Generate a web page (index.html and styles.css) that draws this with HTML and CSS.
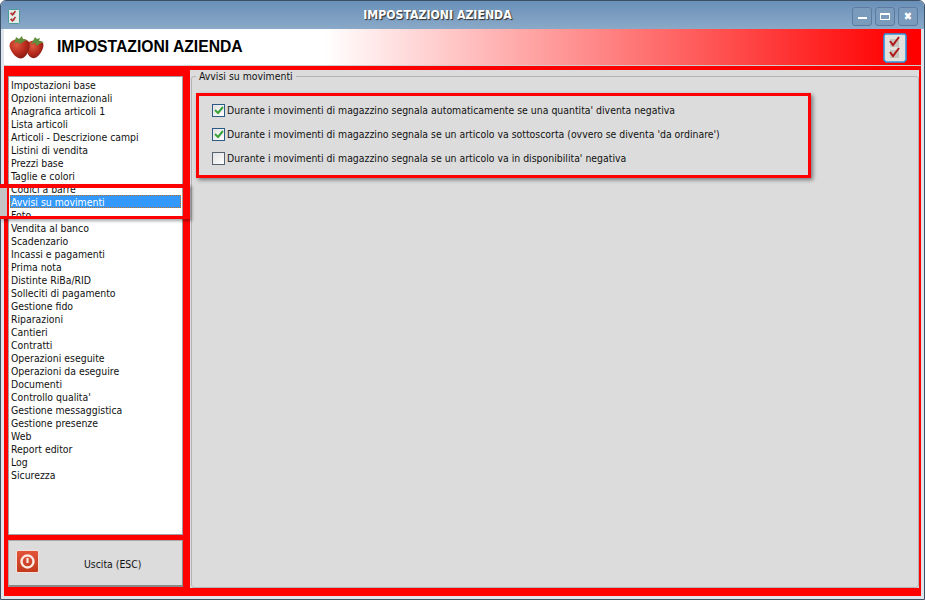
FILE: index.html
```html
<!DOCTYPE html>
<html lang="it">
<head>
    <meta charset="UTF-8">
    <title>IMPOSTAZIONI AZIENDA</title>
    <link rel="stylesheet" href="styles.css">
</head>
<body>
<div class="window">
    <div class="titlebar">
        <svg class="app-icon" width="12" height="15" viewBox="0 0 12 15">
            <rect x="0.5" y="0.5" width="11" height="14" rx="1" fill="#e4ece8" stroke="#4a9a98"/>
            <rect x="3" y="3" width="4" height="3" fill="#bdbdb8"/>
            <rect x="3" y="9" width="4" height="3" fill="#bdbdb8"/>
            <path d="M2.5 4l2 2 3-4M2.5 10l2 2 3-4" fill="none" stroke="#b82020" stroke-width="1.3"/>
        </svg>
        <span class="title-text">IMPOSTAZIONI AZIENDA</span>
        <div class="win-buttons">
            <div class="win-btn"><span class="ico-min"></span></div>
            <div class="win-btn"><span class="ico-max"></span></div>
            <div class="win-btn"><span class="ico-close">&#10006;</span></div>
        </div>
    </div>

    <div class="header">
        <svg class="berries" width="36" height="24" viewBox="0 0 36 24">
            <defs>
                <radialGradient id="berry" cx="0.35" cy="0.3" r="0.8">
                    <stop offset="0" stop-color="#dc5a40"/>
                    <stop offset="0.55" stop-color="#b82a1c"/>
                    <stop offset="1" stop-color="#7c1a14"/>
                </radialGradient>
            </defs>
            <path d="M20 7c4-2 12-2 14 1 2 4-3 13-8 15-4 1-8-3-8-8 0-3 0-6 2-8z" fill="url(#berry)"/>
            <path d="M24 6l2-4 2 2 3-1-1 3 5 1-5 2-2 2-2-3-4 1z" fill="#5f8f3e"/>
            <path d="M3 6c5-3 14-3 17 1 2 5-1 13-6 16-5 2-11-4-13-10-1-3 0-6 2-7z" fill="url(#berry)"/>
            <path d="M6 6l1-4 3 2 3-3 1 3 4 1-4 2-3 2-2-2-4 1z" fill="#628c3c"/>
        </svg>
        <h1 class="header-title">IMPOSTAZIONI AZIENDA</h1>
        <svg class="check-icon" width="24" height="30" viewBox="0 0 24 30">
            <path d="M2 1h20l1 2v24l-2 2H3l-2-2V3z" fill="#e2e2de" stroke="#2f96e0" stroke-width="1.6"/>
            <rect x="7" y="6" width="9" height="8" fill="#c6c6c0"/>
            <rect x="7" y="17" width="9" height="8" fill="#c6c6c0"/>
            <path d="M7 8l3 4 6-8M7 19l3 4 6-8" fill="none" stroke="#b01818" stroke-width="2"/>
        </svg>
    </div>

    <div class="content">
        <div class="sidebar">
            <ul class="menu">
                <li>Impostazioni base</li>
                <li>Opzioni internazionali</li>
                <li>Anagrafica articoli 1</li>
                <li>Lista articoli</li>
                <li>Articoli - Descrizione campi</li>
                <li>Listini di vendita</li>
                <li>Prezzi base</li>
                <li>Taglie e colori</li>
                <li>Codici a barre</li>
                <li class="selected">Avvisi su movimenti</li>
                <li>Foto</li>
                <li>Vendita al banco</li>
                <li>Scadenzario</li>
                <li>Incassi e pagamenti</li>
                <li>Prima nota</li>
                <li>Distinte RiBa/RID</li>
                <li>Solleciti di pagamento</li>
                <li>Gestione fido</li>
                <li>Riparazioni</li>
                <li>Cantieri</li>
                <li>Contratti</li>
                <li>Operazioni eseguite</li>
                <li>Operazioni da eseguire</li>
                <li>Documenti</li>
                <li>Controllo qualita'</li>
                <li>Gestione messaggistica</li>
                <li>Gestione presenze</li>
                <li>Web</li>
                <li>Report editor</li>
                <li>Log</li>
                <li>Sicurezza</li>
            </ul>
            <div class="exit-btn">
                <span class="power">
                    <svg width="17" height="17" viewBox="0 0 17 17">
                        <circle cx="8.5" cy="8.5" r="6" fill="none" stroke="#fbe9e2" stroke-width="2.4"/>
                        <path d="M8.5 5v5" stroke="#fbe9e2" stroke-width="2.2"/>
                    </svg>
                </span>
                <span class="exit-label">Uscita (ESC)</span>
            </div>
            <div class="mark-row"></div>
        </div>

        <div class="panel">
            <fieldset class="group">
                <legend>Avvisi su movimenti</legend>
                <div class="options">
                    <label class="option"><span class="check on"><svg width="10" height="10" viewBox="0 0 10 10"><path d="M1 5l3 3 5-6" fill="none" stroke="#3aa03a" stroke-width="2"/></svg></span>Durante i movimenti di magazzino segnala automaticamente se una quantita' diventa negativa</label>
                    <label class="option"><span class="check on"><svg width="10" height="10" viewBox="0 0 10 10"><path d="M1 5l3 3 5-6" fill="none" stroke="#3aa03a" stroke-width="2"/></svg></span>Durante i movimenti di magazzino segnala se un articolo va sottoscorta (ovvero se diventa 'da ordinare')</label>
                    <label class="option"><span class="check"></span>Durante i movimenti di magazzino segnala se un articolo va in disponibilita' negativa</label>
                </div>
            </fieldset>
        </div>
    </div>
</div>
</body>
</html>
```

FILE: styles.css
```css
html, body {
    margin: 0;
    padding: 0;
    height: 600px;
    overflow: hidden;
    background: #fff;
}

body {
    font-family: "DejaVu Sans", sans-serif;
    font-stretch: condensed;
    font-size: 10.4px;
    color: #111;
}

.window {
    box-sizing: border-box;
    width: 925px;
    height: 600px;
    display: flex;
    flex-direction: column;
    border: 1px solid #3c5066;
    border-radius: 6px 6px 0 0;
    background: #dfe5ea;
    padding: 0 3px 3px 3px;
}

.titlebar {
    height: 28px;
    margin: 0 -3px;
    padding: 0 6px 0 7px;
    display: flex;
    align-items: center;
    position: relative;
    background: linear-gradient(#6a90b8, #8aa9c8);
    border-radius: 5px 5px 0 0;
    flex: none;
}

.app-icon {
    margin-top: 2px;
}

.title-text {
    position: absolute;
    left: 0;
    right: 50px;
    text-align: center;
    font-weight: bold;
    font-size: 12.2px;
    color: #fff;
    text-shadow: 1px 1px 1px #2a2a2a;
}

.win-buttons {
    margin-left: auto;
    margin-top: 2px;
    display: flex;
    gap: 3px;
    position: relative;
}

.win-btn {
    box-sizing: border-box;
    width: 20px;
    height: 19px;
    border: 1px solid #5b7c9f;
    border-radius: 3px;
    background: #7b9bbd;
    display: flex;
    align-items: center;
    justify-content: center;
}

.ico-min {
    width: 9px;
    height: 2px;
    margin-top: 3px;
    background: #fff;
}

.ico-max {
    width: 8px;
    height: 4px;
    border: 1px solid #fff;
    border-top-width: 2px;
}

.ico-close {
    color: #fff;
    font-size: 11px;
    line-height: 1;
}

.header {
    height: 37px;
    box-sizing: border-box;
    flex: none;
    padding: 0 14px 0 5px;
    display: flex;
    align-items: center;
    background: linear-gradient(90deg, #fff 0, #fff 35%, #f00 98%);
    border-bottom: 1px solid #ccc;
}

.header-title {
    margin: 0 0 0 12px;
    font-family: "Liberation Sans", sans-serif;
    font-stretch: normal;
    font-size: 15.7px;
    font-weight: bold;
    color: #000;
}

.check-icon {
    margin-left: auto;
    margin-top: 1px;
}

.content {
    flex: 1;
    min-height: 0;
    display: flex;
    gap: 7px;
    background: #f00;
    padding: 4px 2px 8px 4px;
}

.sidebar {
    width: 175px;
    flex: none;
    display: flex;
    flex-direction: column;
    gap: 5px;
    position: relative;
    padding-top: 6px;
    padding-bottom: 1px;
}

.menu {
    flex: 1;
    list-style: none;
    margin: 0;
    padding: 1px;
    background: #fff;
    border: 1px solid #a0a0a0;
}

.menu li {
    height: 13px;
    line-height: 15px;
    padding-left: 1px;
    white-space: nowrap;
}

.menu li.selected {
    background: #3399ff;
    color: #fff;
    outline: 1px dotted #c07020;
    outline-offset: -1px;
}

.exit-btn {
    height: 47px;
    flex: none;
    box-sizing: border-box;
    border: 1px solid #a8a8a8;
    border-right-color: #8a8a8a;
    border-bottom: 2px solid #8a8a8a;
    background: #dcdcdc;
    display: flex;
    align-items: center;
    padding: 0 0 4px 7px;
}

.power {
    box-sizing: border-box;
    width: 23px;
    height: 23px;
    border: 1px solid #f4e0d8;
    border-radius: 2px;
    background: linear-gradient(#e2543a, #c23a1c);
    display: flex;
    align-items: center;
    justify-content: center;
}

.exit-label {
    margin-left: 45px;
    margin-top: 6px;
}

/* evidenziazione sopra l'elenco */
.mark-row {
    position: absolute;
    left: -8px;
    right: -7px;
    top: 114px;
    height: 28px;
    border-top: 4px solid #f00;
    border-bottom: 3px solid #f00;
    box-shadow: 2px 2px 3px rgba(0, 0, 0, 0.35);
    pointer-events: none;
}

.mark-row::before {
    content: "";
    position: absolute;
    left: 0;
    top: 0;
    bottom: 0;
    width: 7px;
    background: #c4c4c4;
    border-right: 2px solid #f00;
}

.panel {
    flex: 1;
    min-width: 0;
    background: #dcdcdc;
    padding: 2px 0 0 1px;
}

.group {
    box-sizing: border-box;
    height: 100%;
    margin: 0;
    padding: 10px 0 0 4px;
    border: 1px solid #b4b4b4;
    border-radius: 3px;
}

.group legend {
    padding: 0 3px;
    line-height: 8px;
    height: 8px;
}

.options {
    box-sizing: border-box;
    width: 615px;
    height: 85px;
    margin-top: 3px;
    border: 3px solid #f00;
    box-shadow: 2px 2px 4px rgba(0, 0, 0, 0.45);
    display: flex;
    flex-direction: column;
    gap: 10px;
    padding: 7px 0 0 13px;
}

.option {
    height: 14px;
    display: flex;
    align-items: center;
    gap: 2px;
    white-space: nowrap;
}

.check {
    box-sizing: border-box;
    width: 13px;
    height: 13px;
    flex: none;
    border: 1px solid #2b5a85;
    background: linear-gradient(135deg, #e2e2e2, #fff);
    display: flex;
    align-items: center;
    justify-content: center;
}

.check:not(.on) {
    border-color: #56636f;
}
```
